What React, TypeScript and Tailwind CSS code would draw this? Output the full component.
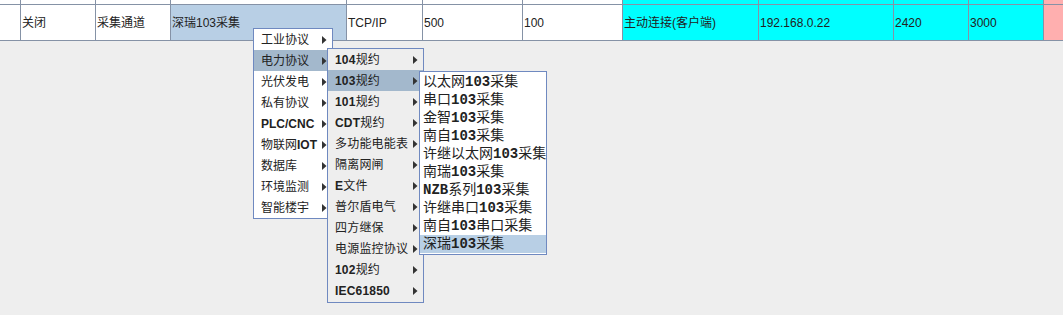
import React from "react";

type Col = { w: string; bg: string; topBg: string; text: string; last?: boolean };

const cols: Col[] = [
  { w: "w-[21px]", bg: "bg-white", topBg: "bg-white", text: "" },
  { w: "w-[75px]", bg: "bg-white", topBg: "bg-white", text: "关闭" },
  { w: "w-[75px]", bg: "bg-white", topBg: "bg-white", text: "采集通道" },
  { w: "w-[176px]", bg: "bg-[#b8cfe5]", topBg: "bg-white", text: "深瑞103采集" },
  { w: "w-[76px]", bg: "bg-white", topBg: "bg-white", text: "TCP/IP" },
  { w: "w-[100px]", bg: "bg-white", topBg: "bg-white", text: "500" },
  { w: "w-[100px]", bg: "bg-white", topBg: "bg-white", text: "100" },
  { w: "w-[136px]", bg: "bg-[#00ffff]", topBg: "bg-[#00ffff]", text: "主动连接(客户端)" },
  { w: "w-[135px]", bg: "bg-[#00ffff]", topBg: "bg-[#00ffff]", text: "192.168.0.22" },
  { w: "w-[75px]", bg: "bg-[#00ffff]", topBg: "bg-[#00ffff]", text: "2420" },
  { w: "w-[75px]", bg: "bg-[#00ffff]", topBg: "bg-[#00ffff]", text: "3000" },
  { w: "w-[19px]", bg: "bg-[#ffafaf]", topBg: "bg-[#ffafaf]", text: "", last: true },
];

function Seg({ text, bold }: { text: string; bold: boolean }) {
  const parts = text.match(/[\x00-\x7f]+|[^\x00-\x7f]+/g) || [];
  return (
    <>
      {parts.map((p, i) =>
        /^[\x00-\x7f]+$/.test(p) ? (
          <span key={i} className={bold ? "font-bold" : ""}>
            {p}
          </span>
        ) : (
          <span key={i}>{p}</span>
        )
      )}
    </>
  );
}

function Arrow() {
  return (
    <svg width="5" height="8" viewBox="0 0 5 8" className="block">
      <path d="M0 0 L4.5 4 L0 8 Z" fill="#333" />
    </svg>
  );
}

const menu1 = ["工业协议", "电力协议", "光伏发电", "私有协议", "PLC/CNC", "物联网IOT", "数据库", "环境监测", "智能楼宇"];
const menu2 = [
  "104规约",
  "103规约",
  "101规约",
  "CDT规约",
  "多功能电能表",
  "隔离网闸",
  "E文件",
  "普尔盾电气",
  "四方继保",
  "电源监控协议",
  "102规约",
  "IEC61850",
];
const menu3 = [
  "以太网103采集",
  "串口103采集",
  "金智103采集",
  "南自103采集",
  "许继以太网103采集",
  "南瑞103采集",
  "NZB系列103采集",
  "许继串口103采集",
  "南自103串口采集",
  "深瑞103采集",
];

export default function App() {
  const uiFont = { fontFamily: '"Liberation Sans", "Noto Sans CJK SC", sans-serif' };
  const m3Font = { fontFamily: '"Liberation Mono", "Noto Sans CJK SC", monospace' };
  return (
    <div className="relative w-[1063px] h-[315px] overflow-hidden bg-[#eeeeee]" style={uiFont}>
      {/* table */}
      <div className="flex h-[5px] border-b border-[#8592a6]">
        {cols.map((c, i) => (
          <div key={i} className={`${c.w} ${c.topBg} h-full ${c.last ? "" : "border-r border-[#8592a6]"}`} />
        ))}
      </div>
      <div className="flex h-[36px] border-b border-[#8592a6]">
        {cols.map((c, i) => (
          <div
            key={i}
            className={`${c.w} ${c.bg} h-full flex items-center pl-[1px] text-[12px] text-[#222] whitespace-nowrap overflow-hidden ${
              c.last ? "" : "border-r border-[#8592a6]"
            }`}
          >
            {c.text}
          </div>
        ))}
      </div>

      {/* menu 1 */}
      <div className="absolute left-[253px] top-[28px] w-[80px] border border-[#6f89c0] bg-white py-[0px] text-[12px] text-[#222] shadow-none">
        {menu1.map((t, i) => (
          <div
            key={i}
            className={`h-[21px] flex items-center pl-[7px] pr-[5px] justify-between leading-none ${
              i === 1 ? "bg-[#a3b8cc]" : ""
            }`}
          >
            <span className="whitespace-nowrap">
              <Seg text={t} bold />
            </span>
            <Arrow />
          </div>
        ))}
      </div>

      {/* menu 2 */}
      <div className="absolute left-[327px] top-[48px] w-[97px] border border-[#6f89c0] bg-[#eeeeee] pb-[1px] text-[12px] text-[#222]">
        {menu2.map((t, i) => (
          <div
            key={i}
            className={`h-[21px] flex items-center pl-[7px] pr-[5px] justify-between leading-none ${
              i === 1 ? "bg-[#a3b8cc]" : ""
            }`}
          >
            <span className="whitespace-nowrap tracking-[0.2px]">
              <Seg text={t} bold />
            </span>
            <Arrow />
          </div>
        ))}
      </div>

      {/* menu 3 */}
      <div
        className="absolute left-[419px] top-[71px] w-[128px] border border-[#6f89c0] bg-white py-[1px] text-[14px] text-[#222]"
        style={m3Font}
      >
        {menu3.map((t, i) => (
          <div
            key={i}
            className={`h-[18px] flex items-center pl-[3px] leading-none whitespace-nowrap ${
              i === 9 ? "bg-[#b8cfe5]" : ""
            }`}
          >
            <Seg text={t} bold />
          </div>
        ))}
      </div>
    </div>
  );
}
